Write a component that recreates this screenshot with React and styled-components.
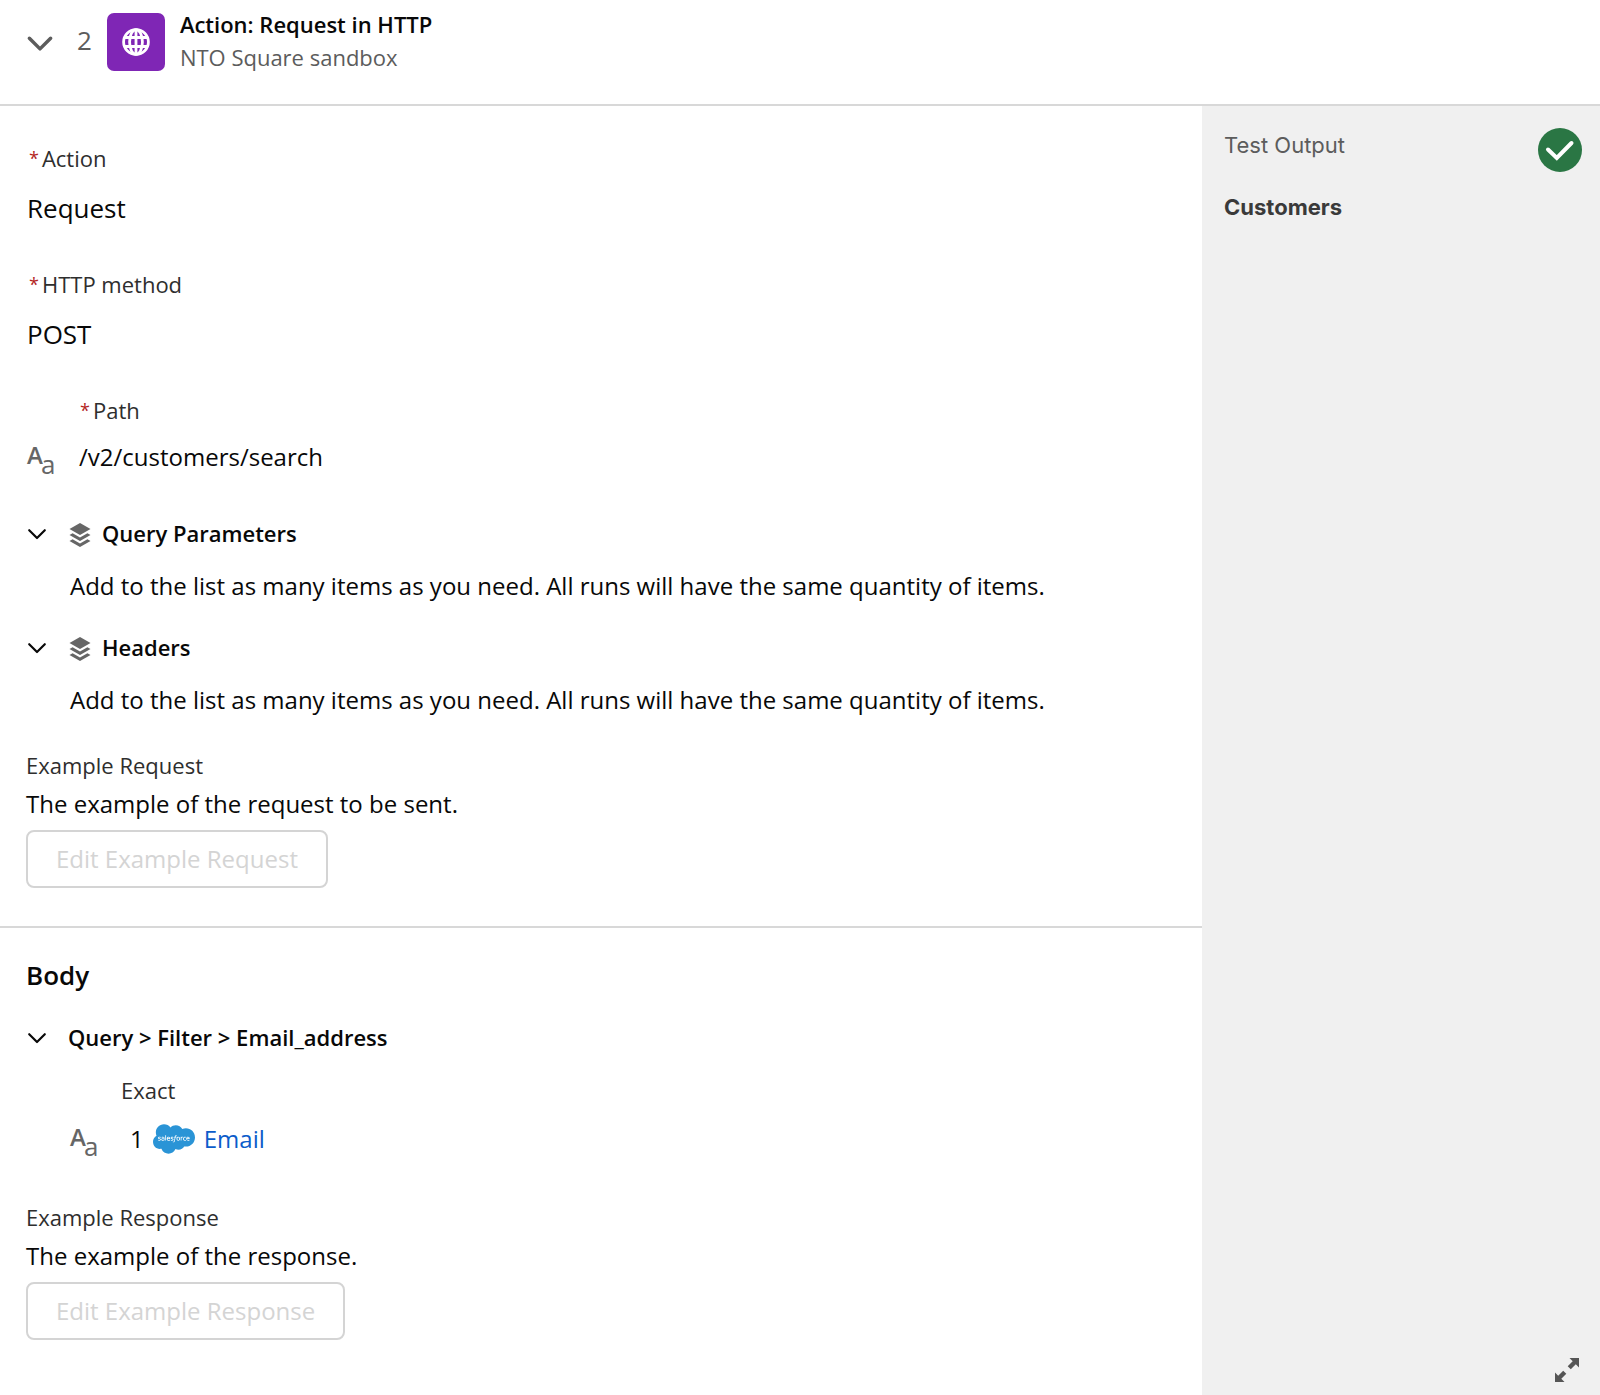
import React, { useState } from "react";
import styled, { createGlobalStyle } from "styled-components";
import { FaSalesforce } from "react-icons/fa";

const GlobalStyle = createGlobalStyle`
  *, *::before, *::after { box-sizing: border-box; }
  body {
    margin: 0;
    background: #fff;
    color: #080808;
    font-family: "Open Sans", "Noto Sans", sans-serif;
    font-size: 24px;
    line-height: 32px;
  }
  h1, h2, h3, p, dl, dt, dd { margin: 0; }
`;

const Page = styled.div`
  min-height: 100vh;
  display: flex;
  flex-direction: column;
`;

const Header = styled.header`
  display: flex;
  align-items: center;
  padding: 8px 25px 28px;
  border-bottom: 2px solid #d8d8d8;
`;

const IconButton = styled.button`
  display: flex;
  flex: none;
  padding: 0;
  border: 0;
  background: none;
  color: ${(p) => p.$color || "#080808"};
  cursor: pointer;
`;

const StepNumber = styled.span`
  margin: 0 15px 0 22px;
  padding-bottom: 4px;
  color: #5c5c5c;
  font-size: 26px;
`;

const ConnectorIcon = styled.span`
  display: grid;
  place-items: center;
  width: 58px;
  height: 58px;
  margin-right: 15px;
  border-radius: 7px;
  background: #7f26b5;
`;

const StepHeading = styled.div`
  padding-bottom: 2px;
`;

const StepTitle = styled.h1`
  font-size: 22px;
  font-weight: 600;
  line-height: 33px;
`;

const StepSubtitle = styled.p`
  color: #5c5c5c;
  font-size: 22px;
  line-height: 33px;
`;

const Columns = styled.div`
  flex: 1;
  display: grid;
  grid-template-columns: minmax(0, 1fr) 398px;
`;

const Main = styled.main`
  min-width: 0;
`;

const Section = styled.section`
  padding: ${(p) => p.$pad};
  & + & { border-top: 2px solid #d8d8d8; }
`;

const Field = styled.dl`
  padding-left: 1px;
  margin-bottom: 43px;
`;

const FieldLabel = styled.dt`
  color: #2e2e2e;
  font-size: 22px;
  line-height: 30px;
`;

const Required = styled.abbr`
  margin: 0 3px 0 2px;
  color: #b3261e;
  font-size: 18px;
  line-height: 1;
  text-decoration: none;
  vertical-align: 2px;
`;

const FieldValue = styled.dd`
  margin-top: 17px;
  font-size: 26px;
  line-height: 36px;
`;

const TypedField = styled.dl`
  display: grid;
  grid-template-columns: 52px 1fr;
  row-gap: ${(p) => (p.$nested ? "18px" : "16px")};
  padding-left: ${(p) => (p.$nested ? "43px" : "0")};
  margin-top: ${(p) => (p.$nested ? "23px" : "0")};
  margin-bottom: ${(p) => (p.$nested ? "0" : "45px")};

  dt { grid-column: 2; }
`;

const TypedValue = styled.dd`
  display: flex;
  align-items: center;
  grid-column: 1 / -1;
  height: 32px;
`;

const TypeSlot = styled.span`
  flex: none;
  display: flex;
  width: 53px;
`;

const Group = styled.section`
  margin-bottom: ${(p) => p.$gap};
`;

const GroupHeader = styled.div`
  display: flex;
  align-items: center;
  gap: 20px;
`;

const GroupTitle = styled.h3`
  display: flex;
  align-items: center;
  gap: 11px;
  font-size: 22px;
  font-weight: 600;
  line-height: 30px;
`;

const GroupText = styled.p`
  margin-top: 22px;
  padding-left: 44px;
`;

const ExampleText = styled.p`
  margin: 8px 0 10px;
`;

const ExampleLabel = styled.h3`
  color: #2e2e2e;
  font-size: 22px;
  font-weight: 400;
  line-height: 30px;
`;

const OutlineButton = styled.button`
  height: 58px;
  padding: 0 28px;
  border: 2px solid #d4d4d4;
  border-radius: 8px;
  background: #fff;
  color: #d4d4d4;
  font: inherit;
`;

const BodyTitle = styled.h2`
  margin-bottom: 29px;
  font-size: 26px;
  font-weight: 600;
  line-height: 36px;
`;

const StepRef = styled.span`
  display: flex;
  align-items: center;
  gap: 9px;
  padding-left: 8px;
`;

const FieldLink = styled.a`
  color: #0b5cca;
  text-decoration: none;
`;

const Aside = styled.aside`
  display: flex;
  flex-direction: column;
  padding: 22px 18px 12px 22px;
  background: #f0f0f0;
  font-family: Inter, Roboto, sans-serif;
  font-size: 22px;
`;

const AsideTop = styled.div`
  display: flex;
  align-items: flex-start;
  justify-content: space-between;
`;

const AsideLabel = styled.h2`
  color: #5c5c5c;
  font-size: 22px;
  font-weight: 400;
  line-height: 34px;
`;

const AsideValue = styled.p`
  flex: 1;
  margin-top: 18px;
  color: #3a3a3a;
  font-weight: 700;
  line-height: 34px;
`;

const AsideFooter = styled.div`
  display: flex;
  justify-content: flex-end;
  padding-right: 2px;
`;

function Chevron({ size, stroke }) {
  return (
    <svg width={size} height={size} viewBox="0 0 24 24" fill="none" stroke="currentColor" strokeWidth={stroke} strokeLinecap="round" strokeLinejoin="round" aria-hidden="true">
      <path d="M3.500 9 12 17.500 20.500 9" />
    </svg>
  );
}

function Globe() {
  return (
    <svg width="28" height="28" viewBox="0 0 28 28" fill="none" stroke="#fff" strokeWidth="2.800" aria-hidden="true">
      <circle cx="14" cy="14" r="12.400" />
      <ellipse cx="14" cy="14" rx="6.400" ry="12.400" />
      <path d="M14 1.500v25M2.500 9.500h23M2.500 18.500h23" />
    </svg>
  );
}

function Layers() {
  return (
    <svg width="23" height="28" viewBox="-1 -4 23 28" fill="#666" aria-hidden="true">
      <path d="M11 0 21.500 6 11 12 .5 6z" />
      <path d="M.5 12 3.600 10.200 11 14.400 18.400 10.200l3.100 1.800L11 18z" />
      <path d="M.5 18 3.600 16.200 11 20.400 18.400 16.200l3.100 1.800L11 24z" />
    </svg>
  );
}

function TextType() {
  return (
    <svg width="34" height="48" viewBox="0 0 34 48" fill="#666" role="img" aria-label="Text">
      <text x="1" y="31" fontSize="24" fontWeight="600">A</text>
      <text x="15" y="41" fontSize="26" fontWeight="500">a</text>
    </svg>
  );
}

function CheckBadge() {
  return (
    <svg width="44" height="44" viewBox="0 0 44 44" fill="none" role="img" aria-label="Success">
      <circle cx="22" cy="22" r="22" fill="#2a7644" />
      <path d="M10 21.500 18.800 30 33.500 15" stroke="#fff" strokeWidth="4" strokeLinecap="round" strokeLinejoin="miter" />
    </svg>
  );
}

function Expand() {
  return (
    <svg width="26" height="26" viewBox="0 0 26 26" fill="#555" aria-hidden="true">
      <path d="M15.500 1H25v9.500l-3.200-3.200-5 5-3.100-3.100 5-5z" />
      <path d="M10.500 25H1v-9.500l3.200 3.200 5-5 3.100 3.100-5 5z" />
    </svg>
  );
}

function Collapsible({ title, icon, gap, children }) {
  const [open, setOpen] = useState(true);
  return (
    <Group $gap={gap}>
      <GroupHeader>
        <IconButton aria-label={`Toggle ${title}`} aria-expanded={open} onClick={() => setOpen(!open)}>
          <Chevron size={22} stroke={2.4} />
        </IconButton>
        <GroupTitle>
          {icon}
          {title}
        </GroupTitle>
      </GroupHeader>
      {open && children}
    </Group>
  );
}

function Label({ required, children }) {
  return (
    <FieldLabel>
      {required && <Required title="required">*</Required>}
      {children}
    </FieldLabel>
  );
}

function Example({ label, text, action }) {
  return (
    <>
      <ExampleLabel>{label}</ExampleLabel>
      <ExampleText>{text}</ExampleText>
      <OutlineButton disabled>{action}</OutlineButton>
    </>
  );
}

const LIST_HINT = "Add to the list as many items as you need. All runs will have the same quantity of items.";

export default function App() {
  return (
    <Page>
      <GlobalStyle />
      <Header>
        <IconButton $color="#5c5c5c" aria-label="Collapse step">
          <Chevron size={30} stroke={2.8} />
        </IconButton>
        <StepNumber>2</StepNumber>
        <ConnectorIcon><Globe /></ConnectorIcon>
        <StepHeading>
          <StepTitle>Action: Request in HTTP</StepTitle>
          <StepSubtitle>NTO Square sandbox</StepSubtitle>
        </StepHeading>
      </Header>
      <Columns>
        <Main>
          <Section $pad="37px 26px 38px">
            <Field>
              <Label required>Action</Label>
              <FieldValue>Request</FieldValue>
            </Field>
            <Field>
              <Label required>HTTP method</Label>
              <FieldValue>POST</FieldValue>
            </Field>
            <TypedField>
              <Label required>Path</Label>
              <TypedValue>
                <TypeSlot><TextType /></TypeSlot>
                /v2/customers/search
              </TypedValue>
            </TypedField>
            <Collapsible title="Query Parameters" icon={<Layers />} gap="30px">
              <GroupText>{LIST_HINT}</GroupText>
            </Collapsible>
            <Collapsible title="Headers" icon={<Layers />} gap="34px">
              <GroupText>{LIST_HINT}</GroupText>
            </Collapsible>
            <Example
              label="Example Request"
              text="The example of the request to be sent."
              action="Edit Example Request"
            />
          </Section>
          <Section $pad="29px 26px 38px">
            <BodyTitle>Body</BodyTitle>
            <Collapsible title="Query > Filter > Email_address" gap="47px">
              <TypedField $nested>
                <Label>Exact</Label>
                <TypedValue>
                  <TypeSlot><TextType /></TypeSlot>
                  <StepRef>
                    1
                    <FaSalesforce size={42} color="#2a94d6" aria-label="Salesforce" />
                    <FieldLink href="#email">Email</FieldLink>
                  </StepRef>
                </TypedValue>
              </TypedField>
            </Collapsible>
            <Example
              label="Example Response"
              text="The example of the response."
              action="Edit Example Response"
            />
          </Section>
        </Main>
        <Aside>
          <AsideTop>
            <AsideLabel>Test Output</AsideLabel>
            <CheckBadge />
          </AsideTop>
          <AsideValue>Customers</AsideValue>
          <AsideFooter>
            <IconButton $color="#555" aria-label="Expand test output"><Expand /></IconButton>
          </AsideFooter>
        </Aside>
      </Columns>
    </Page>
  );
}
